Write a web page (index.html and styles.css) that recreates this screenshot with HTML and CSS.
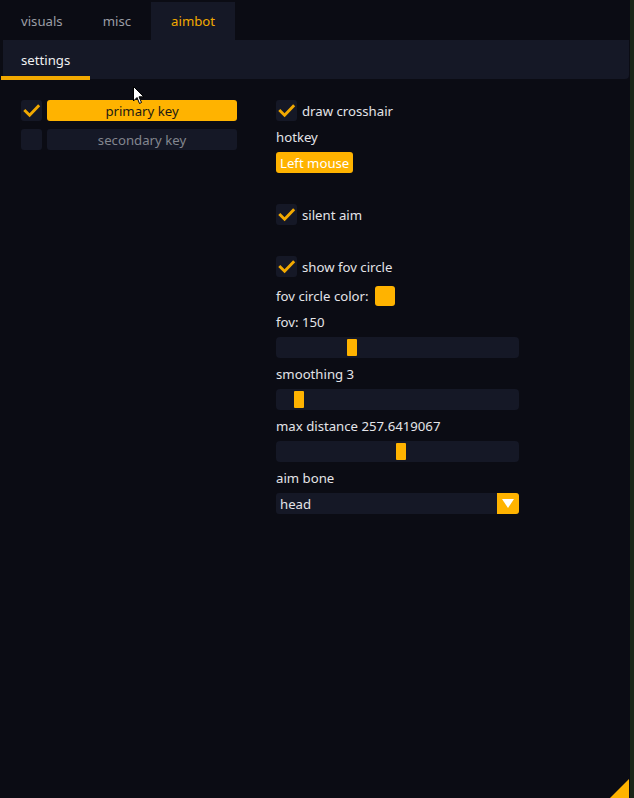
FILE: index.html
```html
<!DOCTYPE html>
<html lang="en">
<head>
    <meta charset="UTF-8">
    <title>aimbot</title>
    <link rel="stylesheet" href="styles.css">
</head>
<body>

<div class="window">
    <div class="tabs">
        <div class="tab">visuals</div>
        <div class="tab">misc</div>
        <div class="tab active">aimbot</div>
    </div>
    <div class="subbar">
        <div class="subtab">settings</div>
    </div>

    <div class="content">
        <!-- left column: keys -->
        <div class="col left">
            <div class="keyrow">
                <div class="check"><svg viewBox="0 0 22 22"><polyline points="4.5,11.5 9,16 18,6.5"/></svg></div>
                <div class="keybtn on">primary key</div>
            </div>
            <div class="keyrow">
                <div class="check"></div>
                <div class="keybtn">secondary key</div>
            </div>
        </div>

        <!-- right column: options -->
        <div class="col right">
            <div class="row">
                <div class="check"><svg viewBox="0 0 22 22"><polyline points="4.5,11.5 9,16 18,6.5"/></svg></div>
                <span>draw crosshair</span>
            </div>
            <div class="text">hotkey</div>
            <div class="row"><div class="hotkey">Left mouse</div></div>
            <div class="blank"></div>
            <div class="row">
                <div class="check"><svg viewBox="0 0 22 22"><polyline points="4.5,11.5 9,16 18,6.5"/></svg></div>
                <span>silent aim</span>
            </div>
            <div class="blank"></div>
            <div class="row">
                <div class="check"><svg viewBox="0 0 22 22"><polyline points="4.5,11.5 9,16 18,6.5"/></svg></div>
                <span>show fov circle</span>
            </div>
            <div class="row">
                <span>fov circle color:</span>
                <div class="swatch"></div>
            </div>
            <div class="text">fov: 150</div>
            <div class="slider"><div class="thumb" style="left: 71px"></div></div>
            <div class="text">smoothing 3</div>
            <div class="slider"><div class="thumb" style="left: 18px"></div></div>
            <div class="text">max distance 257.6419067</div>
            <div class="slider"><div class="thumb" style="left: 120px"></div></div>
            <div class="text">aim bone</div>
            <div class="combo">
                <span>head</span>
                <div class="arrow"><svg viewBox="0 0 22 21"><polygon points="5,6 17,6 11,15"/></svg></div>
            </div>
        </div>
    </div>

    <div class="grip"></div>
    <svg class="cursor" viewBox="0 0 12 19"><path d="M0.5 0.5 L0.5 15 L4 11.5 L6.5 17.5 L8.5 16.5 L6 10.8 L10.8 10.8 Z"/></svg>
</div>
<div class="edge"></div>

</body>
</html>
```

FILE: styles.css
```css
body {
    margin: 0;
    display: flex;
    height: 798px;
    overflow: hidden;
    background-color: #0b0c14;
    font-family: "Noto Sans", sans-serif;
    font-size: 13.2px;
    color: #e4e4e8;
}
.window {
    position: relative;
    width: 630px;
    height: 798px;
    background-color: #0b0c14;
}
.edge {
    width: 4px;
    background-color: #1b2517;
}
.tabs {
    display: flex;
    height: 38px;
    padding: 2px 0 0 1px;
}
.tab {
    padding: 0 20px;
    line-height: 38px;
    color: #9c9ea6;
}
.tab.active {
    background-color: #151826;
    color: #f2a900;
}
.subbar {
    height: 39px;
    margin: 0 1px 0 3px;
    background-color: #151826;
    border-radius: 0 0 4px 0;
    position: relative;
}
.subtab {
    position: absolute;
    left: -2px;
    top: 0;
    height: 36px;
    padding: 0 20px;
    line-height: 41px;
    color: #f0f0f2;
    border-bottom: 4px solid #f2a900;
}
.content {
    display: flex;
    padding: 21px 0 0 21px;
    gap: 39px;
}
.col {
    display: flex;
    flex-direction: column;
}
.left {
    width: 216px;
    gap: 8px;
}
.right {
    width: 243px;
    gap: 8px;
}
.keyrow {
    display: flex;
    gap: 5px;
    height: 21px;
}
.check {
    width: 21px;
    height: 21px;
    flex: none;
    background-color: #151826;
    border-radius: 3px;
}
.check svg {
    width: 21px;
    height: 21px;
    display: block;
    fill: none;
    stroke: #f2a900;
    stroke-width: 3;
    stroke-linecap: square;
}
.keybtn {
    flex: 1;
    height: 21px;
    border-radius: 3px;
    background-color: #151826;
    color: #83868f;
    text-align: center;
    line-height: 23px;
}
.keybtn.on {
    background-color: #ffb300;
    color: #1c1a14;
}
.row {
    display: flex;
    align-items: center;
    gap: 5px;
    height: 21px;
}
.row span {
    padding-top: 1px;
}
.text {
    height: 15px;
    line-height: 17px;
}
.blank {
    height: 15px;
}
.hotkey {
    height: 21px;
    background-color: #ffb300;
    color: #fff;
    border-radius: 3px;
    padding: 0 4px;
    line-height: 23px;
}
.swatch {
    width: 20px;
    height: 20px;
    background-color: #ffb300;
    border-radius: 3px;
    margin: 1px 0 0 1px;
}
.slider {
    position: relative;
    height: 21px;
    background-color: #151826;
    border-radius: 4px;
}
.thumb {
    position: absolute;
    top: 2px;
    width: 10px;
    height: 17px;
    background-color: #ffb300;
    border-radius: 1px;
}
.combo {
    display: flex;
    height: 21px;
    background-color: #151826;
    border-radius: 3px;
    line-height: 23px;
}
.combo span {
    flex: 1;
    padding-left: 4px;
}
.arrow {
    width: 22px;
    background-color: #ffb300;
    border-radius: 0 3px 3px 0;
}
.arrow svg {
    display: block;
    width: 22px;
    height: 21px;
    fill: #fff;
}
.grip {
    position: absolute;
    right: 1px;
    bottom: 0;
    width: 0;
    height: 0;
    border-left: 19px solid transparent;
    border-bottom: 19px solid #ffb300;
}
.cursor {
    position: absolute;
    left: 133px;
    top: 86px;
    width: 12px;
    height: 19px;
    fill: #fff;
    stroke: #000;
    stroke-width: 1;
}
```
